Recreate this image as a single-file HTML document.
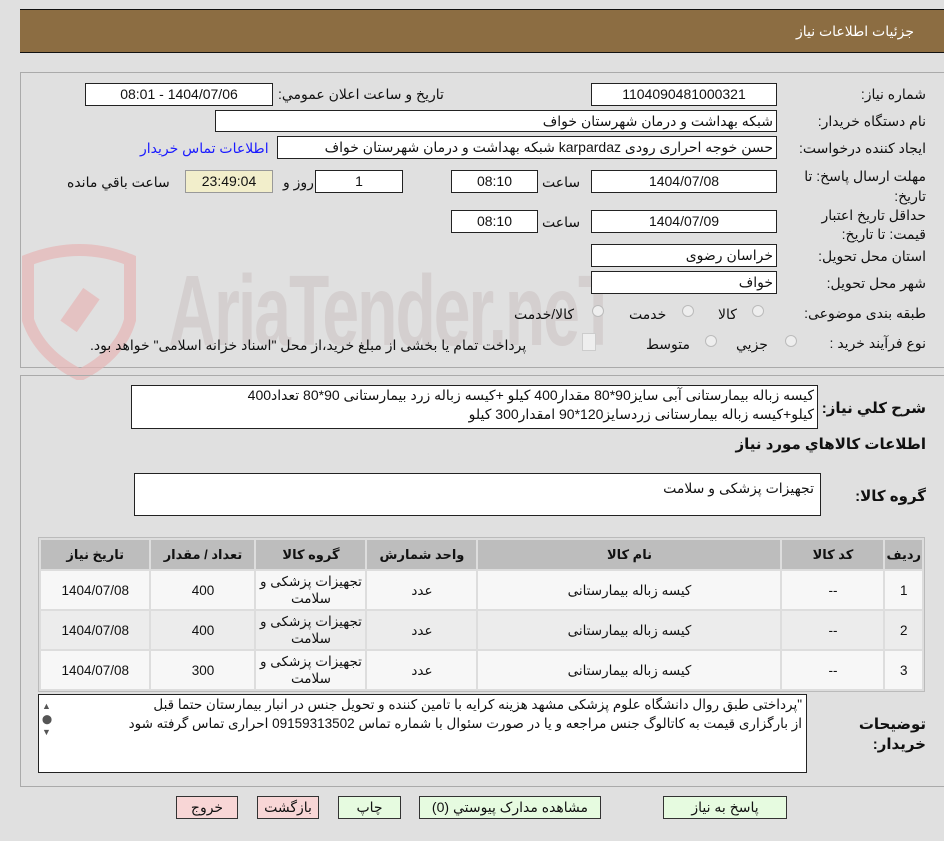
<!DOCTYPE html>
<html><head><meta charset="utf-8"><style>
body{margin:0;width:944px;height:841px;background:#e0e0e0;font-family:"Liberation Sans","DejaVu Sans",sans-serif;font-size:14px;color:#111;position:relative;overflow:hidden;direction:rtl}
.a{position:absolute}
.box{position:absolute;background:#fff;border:1px solid #222;box-sizing:border-box;text-align:center;line-height:20px;font-size:14px;white-space:nowrap;overflow:hidden}
.lbl{position:absolute;white-space:nowrap;font-size:14px}
.rad{position:absolute;width:12px;height:12px;border:1px solid #bbb;border-radius:50%;background:#eee;box-sizing:border-box}
table{position:absolute;border-collapse:separate;border-spacing:2px;background:#ddd;border:1px solid #bbb;font-size:13.5px}
th{background:#bdbdbd;height:27px;font-weight:bold;font-size:13px}
td{text-align:center;height:36px;line-height:17px}
tr.o td{background:#f7f7f7} tr.e td{background:#ececec}
.btn{position:absolute;height:23px;border:1px solid #333;box-sizing:border-box;text-align:center;line-height:21px;font-size:14px;background:#e6fbe0}
.r{background:#f8d6d6}
</style></head><body>
<div class="a" style="left:20px;top:9px;width:924px;height:44px;background:#8c6d42;border-top:1px solid #111;border-bottom:1px solid #111;box-sizing:border-box"></div>
<div class="lbl" style="right:30px;top:23px;color:#fff">جزئیات اطلاعات نیاز</div>

<div class="a" style="left:20px;top:72px;width:930px;height:294px;border:1px solid #aaa;border-right:none"></div>
<svg class="a" style="left:20px;top:230px;opacity:0.7" width="620" height="150" viewBox="0 0 620 150">
<path d="M8 30 Q60 10 110 30 L110 90 Q100 125 60 145 Q20 125 8 90Z" fill="none" stroke="#e6b6b6" stroke-width="12"/>
<rect x="50" y="60" width="20" height="40" fill="#e6b6b6" transform="rotate(35 60 80)"/>
<text x="225" y="115" font-size="100" fill="#d0c9c9" font-family="Liberation Sans" font-weight="bold" direction="ltr" transform="scale(0.66,1)" style="letter-spacing:-3px">AriaTender.neT</text>
</svg>

<div class="lbl" style="right:18px;top:86px">شماره نیاز:</div>
<div class="box" style="left:591px;top:83px;width:186px;height:23px">1104090481000321</div>
<div class="lbl" style="left:278px;top:86px">تاریخ و ساعت اعلان عمومي:</div>
<div class="box" style="left:85px;top:83px;width:188px;height:23px">1404/07/06 - 08:01</div>

<div class="lbl" style="right:18px;top:113px">نام دستگاه خریدار:</div>
<div class="box" style="left:215px;top:110px;width:562px;height:22px;text-align:right;padding-right:3px">شبکه بهداشت و درمان شهرستان خواف</div>

<div class="lbl" style="right:18px;top:140px">ایجاد کننده درخواست:</div>
<div class="box" style="left:277px;top:136px;width:500px;height:23px;text-align:right;padding-right:3px">حسن خوجه احراری رودی karpardaz شبکه بهداشت و درمان شهرستان خواف</div>
<div class="lbl" style="left:140px;top:140px;color:#1a1aff">اطلاعات تماس خریدار</div>

<div class="lbl" style="right:18px;top:166px;line-height:20px">مهلت ارسال پاسخ: تا<br>تاریخ:</div>
<div class="box" style="left:591px;top:170px;width:186px;height:23px">1404/07/08</div>
<div class="lbl" style="left:542px;top:174px">ساعت</div>
<div class="box" style="left:451px;top:170px;width:87px;height:23px">08:10</div>
<div class="box" style="left:315px;top:170px;width:88px;height:23px">1</div>
<div class="lbl" style="left:283px;top:174px">روز و</div>
<div class="box" style="left:185px;top:170px;width:88px;height:23px;background:#f2eecb;border-color:#999">23:49:04</div>
<div class="lbl" style="left:67px;top:174px">ساعت باقي مانده</div>

<div class="lbl" style="right:18px;top:206px;line-height:19px">حداقل تاریخ اعتبار<br>قیمت: تا تاریخ:</div>
<div class="box" style="left:591px;top:210px;width:186px;height:23px">1404/07/09</div>
<div class="lbl" style="left:542px;top:214px">ساعت</div>
<div class="box" style="left:451px;top:210px;width:87px;height:23px">08:10</div>

<div class="lbl" style="right:18px;top:248px">استان محل تحویل:</div>
<div class="box" style="left:591px;top:244px;width:186px;height:23px;text-align:right;padding-right:3px">خراسان رضوی</div>
<div class="lbl" style="right:18px;top:275px">شهر محل تحویل:</div>
<div class="box" style="left:591px;top:271px;width:186px;height:23px;text-align:right;padding-right:3px">خواف</div>

<div class="lbl" style="right:18px;top:305px">طبقه بندی موضوعی:</div>
<div class="rad" style="left:752px;top:305px"></div><div class="lbl" style="left:718px;top:306px">کالا</div>
<div class="rad" style="left:682px;top:305px"></div><div class="lbl" style="left:629px;top:306px">خدمت</div>
<div class="rad" style="left:592px;top:305px"></div><div class="lbl" style="left:514px;top:306px">کالا/خدمت</div>

<div class="lbl" style="right:18px;top:335px">نوع فرآیند خرید :</div>
<div class="rad" style="left:785px;top:335px"></div><div class="lbl" style="left:736px;top:336px">جزيي</div>
<div class="rad" style="left:705px;top:335px"></div><div class="lbl" style="left:646px;top:336px">متوسط</div>
<div class="a" style="left:582px;top:333px;width:12px;height:16px;border:1px solid #ccc;background:#eee"></div>
<div class="lbl" style="left:90px;top:337px">پرداخت تمام یا بخشی از مبلغ خرید،از محل "اسناد خزانه اسلامی" خواهد بود.</div>

<div class="a" style="left:20px;top:375px;width:930px;height:410px;border:1px solid #aaa;border-right:none"></div>
<div class="lbl" style="right:18px;top:399px;font-weight:bold;font-size:15px">شرح کلي نیاز:</div>
<div class="box" style="left:131px;top:385px;width:687px;height:44px;text-align:right;padding-right:3px;line-height:19px;font-size:14px">کیسه زباله بیمارستانی آبی سایز90*80 مقدار400 کیلو +کیسه زباله زرد بیمارستانی 90*80 تعداد400<br>کیلو+کیسه زباله بیمارستانی زردسایز120*90 امقدار300 کیلو</div>
<div class="lbl" style="right:18px;top:435px;font-weight:bold;font-size:15px">اطلاعات کالاهاي مورد نیاز</div>
<div class="lbl" style="right:18px;top:487px;font-weight:bold;font-size:15px">گروه کالا:</div>
<div class="box" style="left:134px;top:473px;width:687px;height:43px;text-align:right;padding-right:6px;line-height:28px">تجهیزات پزشکی و سلامت</div>

<table style="left:38px;top:537px;width:887px">
<tr><th style="width:32px">ردیف</th><th style="width:99px">کد کالا</th><th style="width:300px">نام کالا</th><th style="width:107px">واحد شمارش</th><th style="width:107px">گروه کالا</th><th style="width:101px">تعداد / مقدار</th><th>تاریخ نیاز</th></tr>
<tr class="o"><td>1</td><td>--</td><td>کیسه زباله بیمارستانی</td><td>عدد</td><td>تجهیزات پزشکی و سلامت</td><td>400</td><td>1404/07/08</td></tr>
<tr class="e"><td>2</td><td>--</td><td>کیسه زباله بیمارستانی</td><td>عدد</td><td>تجهیزات پزشکی و سلامت</td><td>400</td><td>1404/07/08</td></tr>
<tr class="o"><td>3</td><td>--</td><td>کیسه زباله بیمارستانی</td><td>عدد</td><td>تجهیزات پزشکی و سلامت</td><td>300</td><td>1404/07/08</td></tr>
</table>

<div class="lbl" style="right:18px;top:715px;font-weight:bold;font-size:15px;line-height:20px">توضیحات<br>خریدار:</div>
<div class="box" style="left:38px;top:694px;width:769px;height:79px;text-align:right;padding-right:4px;padding-left:20px;line-height:19px;font-size:13.5px">"پرداختی طبق روال دانشگاه علوم پزشکی مشهد  هزینه کرایه با تامین کننده و تحویل جنس در انبار بیمارستان  حتما قبل<br>از بارگزاری قیمت به کاتالوگ جنس مراجعه و یا در صورت سئوال با  شماره تماس 09159313502 احراری تماس گرفته شود</div>
<div class="a" style="left:42px;top:700px;font-size:9px;color:#555;line-height:13px;direction:ltr">▲<br>⬤<br>▼</div>

<div class="btn" style="left:663px;top:796px;width:124px">پاسخ به نیاز</div>
<div class="btn" style="left:419px;top:796px;width:182px">مشاهده مدارک پیوستي (0)</div>
<div class="btn" style="left:338px;top:796px;width:63px">چاپ</div>
<div class="btn r" style="left:257px;top:796px;width:62px">بازگشت</div>
<div class="btn r" style="left:176px;top:796px;width:62px">خروج</div>
</body></html>
